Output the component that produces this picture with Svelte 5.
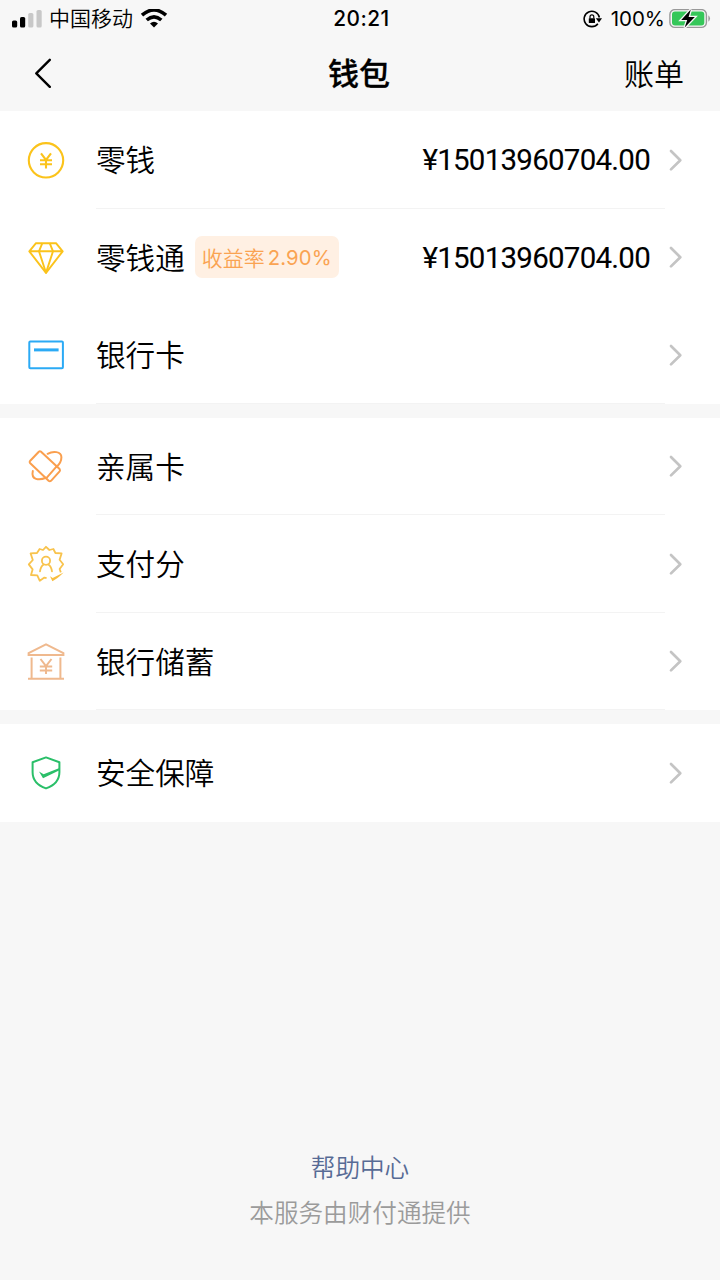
<script lang="ts">
  interface Item {
    icon: string;
    label: string;
    badge?: string;
    rate?: string;
    amount?: string;
    divider?: boolean;
  }

  const groups: Item[][] = [
    [
      { icon: 'coin', label: '零钱', amount: '¥15013960704.00', divider: true },
      { icon: 'diamond', label: '零钱通', badge: '收益率', rate: '2.90%', amount: '¥15013960704.00' },
      { icon: 'card', label: '银行卡', divider: true },
    ],
    [
      { icon: 'family', label: '亲属卡', divider: true },
      { icon: 'score', label: '支付分', divider: true },
      { icon: 'bank', label: '银行储蓄', divider: true },
    ],
    [{ icon: 'shield', label: '安全保障' }],
  ];
</script>

<div class="screen">
  <header class="status">
    <div class="carrier">
      <svg class="signal" width="30" height="18" viewBox="0 0 30 18">
        <rect x="0" y="10.5" width="5.2" height="7" rx="1.6" />
        <rect x="8" y="7" width="5.2" height="10.5" rx="1.6" />
        <rect x="16.2" y="3" width="5.2" height="14.5" rx="1.6" fill="#c8c8c8" />
        <rect x="24.5" y="0" width="5.2" height="17.5" rx="1.6" fill="#c8c8c8" />
      </svg>
      <span>中国移动</span>
      <svg class="wifi" width="28" height="20" viewBox="0 0 28 20">
        <path d="M2 6.2 Q14 -4.2 26 6.2 M6.7 11 Q14 4.6 21.3 11" fill="none" stroke="#000" stroke-width="3.6" />
        <path d="M10 14.4 Q14 11 18 14.4 L14 18.4Z" />
      </svg>
    </div>
    <time>20:21</time>
    <div class="power">
      <svg class="lock" width="20" height="18" viewBox="0 0 20 18">
        <path d="M14.9 13.7 A7.7 7.7 0 1 1 16.4 7.5" fill="none" stroke="#000" stroke-width="1.6" />
        <path d="M12.8 8.2h6.2l-3 4.3z" />
        <rect x="5.8" y="8.2" width="6.2" height="4.9" rx=".6" />
        <path d="M7 8.5V6.8a1.9 1.9 0 0 1 3.8 0v1.7" fill="none" stroke="#000" stroke-width="1.2" />
      </svg>
      <span>100%</span>
      <svg class="battery" width="42" height="20" viewBox="0 0 42 20">
        <rect x=".9" y=".6" width="36.5" height="17.8" rx="5" fill="none" stroke="#999" stroke-width="1.4" />
        <rect x="3" y="2.6" width="32.3" height="13.8" rx="3" fill="#35c759" />
        <path d="M39.4 6.3a4 4 0 0 1 0 6.4z" fill="#999" />
        <path d="M21.8 .6 L12.2 10.9 H18.2 L15.7 18.6 L25.8 8.1 H19.6Z" stroke="#f7f7f7" stroke-width="2.6" paint-order="stroke" />
      </svg>
    </div>
  </header>

  <nav class="nav">
    <button class="back" aria-label="返回">
      <svg width="18" height="30" viewBox="0 0 18 30">
        <path d="M15.8 1.8 L2.3 15.3 L15.8 28.8" fill="none" stroke="#000" stroke-width="2.4" stroke-linecap="round" stroke-linejoin="round" />
      </svg>
    </button>
    <h1>钱包</h1>
    <button class="bill">账单</button>
  </nav>

  <main>
    {#each groups as group}
      <section class="group">
        {#each group as item}
          <div class="row">
            <svg class="icon" viewBox="0 0 40 40" fill="none">
              {#if item.icon === 'coin'}
                <g stroke="#fbc31b" stroke-width="2.1">
                  <circle cx="20" cy="20.3" r="17.2" />
                  <path d="M15 13.4 L20 20 L25 13.4 M20 20V28.4 M14 20.3H26 M14 24.3H26" />
                </g>
              {:else if item.icon === 'diamond'}
                <g stroke="#fbc31b" stroke-width="1.9" stroke-linejoin="round">
                  <path d="M10 6.2H30L36.7 14.3 20 35.8 3.3 14.3Z M3.3 14.3H36.7" />
                  <path d="M16.3 6.2 L13 14.3 L20 35.8 L27 14.3 L23.7 6.2" />
                </g>
              {:else if item.icon === 'card'}
                <rect x="3.3" y="6.6" width="33.6" height="26.6" rx="1" stroke="#2baaf5" stroke-width="2" />
                <path d="M8 14.9H32.6" stroke="#2baaf5" stroke-width="3" />
              {:else if item.icon === 'family'}
                <g stroke="#fa9f4e" stroke-width="2" stroke-linecap="round" stroke-linejoin="round" transform="translate(0 .8)">
                  <path d="M14.8 4.7 L33.6 22.3 Q34.4 23.4 33.6 24.5 L25 34 Q23.8 35 22.6 34 L4 16.2 Q3.2 15.2 4 14.2 L12.8 4.9 Q13.8 4 14.8 4.7Z" />
                  <path d="M30.2 20.1 L20.6 31" />
                  <path d="M21.6 7 C27 4 35.3 4.4 35.4 10.5 C35.4 14.5 33.5 17.5 30.5 20.2" />
                  <path d="M6.8 24.3 C4.8 33.2 13.1 33.8 20 31" />
                </g>
              {:else if item.icon === 'score'}
                <g stroke="#f8c34d" stroke-width="1.8" stroke-linejoin="round">
                  <path d="M20.6 34.2 L18.4 33.6 L13.8 36.8 L11.3 31.4 L5 31 L6.6 25.4 L2.8 20.4 L6.8 16 L4.6 9.4 L11 9 L13.6 5 L17 6 L20 2.8 L23.4 6 L27.4 5 L29.4 9 L35.6 9.4 L33.6 15.8 L37.2 20.2 L33.6 25 L34.8 28.4" />
                  <circle cx="20" cy="16.8" r="4.1" />
                  <path d="M14 27.4 Q14.6 22.4 17.7 20.4 M26 27.4 Q25.4 22.4 22.3 20.4" stroke-linecap="round" />
                </g>
                <path d="M24 32.2 L26.7 34 L37.6 28.6 Q31 35.3 26.4 37.2Z" fill="#f8bd3f" />
              {:else if item.icon === 'bank'}
                <g stroke="#efb98e" stroke-width="2">
                  <path d="M2.6 14.1V12 L20 3.4 37.4 12V14.1Z M5.6 16.5V37 M34.4 16.5V37 M2 37.8H38" />
                  <path d="M14.5 18 L20 25.2 L25.5 18 M20 25V33 M13.8 25.6H26.2 M13.8 29.6H26.2" />
                </g>
              {:else}
                <path d="M20 4.4 L33.4 9.2 V19.3 C33.4 27.1 28 32.6 20 35.4 C12 32.6 6.6 27.1 6.6 19.3 V9.2Z" stroke="#2abf69" stroke-width="2" stroke-linejoin="round" />
                <path d="M13 18.4 L17.6 21.2 L33.5 14.9 V17.2 L17 25.2Z" fill="#2abf69" />
              {/if}
            </svg>
            <div class="content" class:divider={item.divider}>
              <span class="label">{item.label}</span>
              {#if item.badge}
                <span class="badge">{item.badge}<span class="rate">{item.rate}</span></span>
              {/if}
              {#if item.amount}
                <span class="amount">{item.amount}</span>
              {/if}
            </div>
            <svg class="chevron" width="14" height="24" viewBox="0 0 14 24">
              <path d="M2 3 L11.3 12.2 L2 21.4" fill="none" stroke="#c4c4c4" stroke-width="2.7" stroke-linecap="round" stroke-linejoin="round" />
            </svg>
          </div>
        {/each}
      </section>
    {/each}
  </main>

  <footer>
    <a href="#help">帮助中心</a>
    <p>本服务由财付通提供</p>
  </footer>
</div>

<style>
  :global(body) {
    background: #f7f7f7;
  }

  .screen {
    display: flex;
    flex-direction: column;
    width: 720px;
    height: 1280px;
    overflow: hidden;
    background: #f7f7f7;
    color: #000;
    font-family: 'Noto Sans CJK SC', sans-serif;
    font-weight: 350;
  }

  svg {
    display: block;
    flex-shrink: 0;
  }

  .status {
    display: grid;
    grid-template-columns: 1fr auto 1fr;
    align-items: center;
    height: 37px;
    padding: 0 9px 1px 12px;
    box-sizing: border-box;
    font-size: 21px;
    line-height: 36px;
  }

  .carrier,
  .power {
    display: flex;
    align-items: center;
  }

  .carrier span {
    margin: 0 7px;
    padding-bottom: 4px;
    line-height: 32px;
  }

  .status time {
    padding-top: 1px;
    font-family: Inter, sans-serif;
    font-size: 20.8px;
    font-weight: 500;
    letter-spacing: 0.5px;
  }

  .power {
    justify-content: flex-end;
    font-family: Inter, sans-serif;
    font-size: 20.5px;
    font-weight: 400;
  }

  .power span {
    margin: 0 4px 0 8px;
    padding-top: 1px;
  }

  .nav {
    display: grid;
    grid-template-columns: 1fr auto 1fr;
    align-items: center;
    height: 70px;
    padding: 0 36px 4px 34px;
  }

  button {
    padding: 0;
    border: none;
    background: none;
    color: inherit;
    font: inherit;
  }

  .back {
    justify-self: start;
    padding-top: 2px;
  }

  h1 {
    margin: 0;
    font-size: 31px;
    font-weight: 500;
    line-height: 44px;
    -webkit-text-stroke: 0.3px #000;
  }

  .bill {
    justify-self: end;
    font-size: 30px;
    line-height: 44px;
  }

  .group {
    margin-bottom: 14px;
    background: #fff;
  }

  .row {
    display: flex;
    align-items: center;
    height: 97.5px;
    padding: 0 37px 0 26px;
  }

  .icon {
    width: 40px;
    height: 40px;
    margin-right: 30px;
  }

  .content {
    display: flex;
    flex: 1;
    align-items: center;
    height: 100%;
    box-sizing: border-box;
    border-bottom: 1px solid transparent;
  }

  .content.divider {
    border-bottom-color: #f3f3f3;
  }

  .label {
    font-size: 29.6px;
    line-height: 44px;
  }

  .badge {
    display: flex;
    align-items: center;
    height: 42px;
    margin-left: 10px;
    padding: 0 7px;
    border-radius: 7px;
    background: #fff0e3;
    color: #faa352;
    font-size: 21px;
    line-height: 38px;
  }

  .rate {
    margin-left: 3px;
    padding-top: 2px;
    font-family: Inter, sans-serif;
    font-size: 20.3px;
    font-weight: 400;
    letter-spacing: 0.1px;
  }

  .amount {
    margin-left: auto;
    margin-right: 15px;
    padding-top: 2px;
    font-family: Roboto, sans-serif;
    font-size: 29.5px;
    font-weight: 400;
    letter-spacing: -0.75px;
    -webkit-text-stroke: 0.1px #000;
  }

  .chevron {
    margin-left: 4px;
  }

  footer {
    display: flex;
    flex-direction: column;
    align-items: center;
    margin-top: auto;
    padding-bottom: 51px;
    font-size: 24.6px;
    line-height: 36px;
  }

  footer a {
    color: #576b95;
    text-decoration: none;
  }

  footer p {
    margin: 9px 0 0;
    color: #9b9b9b;
  }
</style>
